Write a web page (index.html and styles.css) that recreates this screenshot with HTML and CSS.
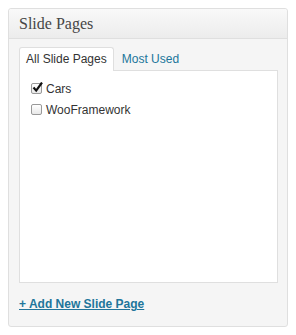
FILE: index.html
```html
<!DOCTYPE html>
<html lang="en">
<head>
    <meta charset="UTF-8">
    <title>Slide Pages</title>
    <link rel="stylesheet" href="styles.css">
</head>
<body>
    <div class="postbox">
        <h3 class="postbox-title">Slide Pages</h3>
        <div class="inside">
            <ul class="tabs">
                <li class="tab active">All Slide Pages</li>
                <li class="tab"><a href="#">Most Used</a></li>
            </ul>
            <div class="tab-panel">
                <ul class="checklist">
                    <li>
                        <span class="check checked">
                            <svg width="11" height="11" viewBox="0 0 11 11"><path d="M1.5 5.5 L4.2 8.6 L10 0.5" fill="none" stroke="#111" stroke-width="2.2"/></svg>
                        </span>
                        Cars
                    </li>
                    <li><span class="check"></span>WooFramework</li>
                </ul>
            </div>
            <a class="add-new" href="#">+ Add New Slide Page</a>
        </div>
    </div>
</body>
</html>
```

FILE: styles.css
```css
body {
    margin: 8px;
    background-color: #fff;
    font-family: "Liberation Sans", Arial, sans-serif;
    font-size: 12px;
    color: #333;
}
.postbox {
    box-sizing: border-box;
    height: 319px;
    border: 1px solid #dfdfdf;
    border-radius: 3px;
    background-color: #f5f5f5;
    box-shadow: inset 0 1px 0 #fff;
}
.postbox-title {
    margin: 0;
    height: 29px;
    line-height: 29px;
    padding-left: 10px;
    font-family: "Liberation Serif", Georgia, serif;
    font-size: 16px;
    font-weight: normal;
    color: #464646;
    border-bottom: 1px solid #dfdfdf;
    background: linear-gradient(to bottom, #f9f9f9, #ececec);
    border-radius: 3px 3px 0 0;
}
.inside {
    padding: 8px 9px 0 10px;
}
.tabs {
    list-style: none;
    margin: 0;
    padding: 0;
    display: flex;
    height: 23px;
}
.tab {
    padding: 0 6px;
    line-height: 23px;
    border: 1px solid transparent;
    border-bottom: none;
    border-radius: 3px 3px 0 0;
    position: relative;
    z-index: 1;
}
.tab.active {
    background-color: #fff;
    border-color: #dfdfdf;
    color: #333;
    height: 23px;
}
.tab a {
    color: #21759b;
    text-decoration: none;
    padding-left: 1px;
}
.tab-panel {
    box-sizing: border-box;
    height: 213px;
    background-color: #fff;
    border: 1px solid #dfdfdf;
}
.checklist {
    list-style: none;
    margin: 0;
    padding: 7px 0 0 11px;
}
.checklist li {
    display: flex;
    align-items: center;
    height: 21px;
}
.check {
    box-sizing: border-box;
    width: 11px;
    height: 11px;
    border: 1px solid #999;
    border-radius: 2px;
    background: linear-gradient(to bottom, #fff, #e8e8e8);
    margin-right: 4px;
    position: relative;
}
.check svg {
    position: absolute;
    left: 0;
    top: -2px;
}
.add-new {
    display: inline-block;
    margin-top: 13px;
    line-height: 17px;
    color: #21759b;
    font-weight: bold;
    font-size: 12px;
}
```
